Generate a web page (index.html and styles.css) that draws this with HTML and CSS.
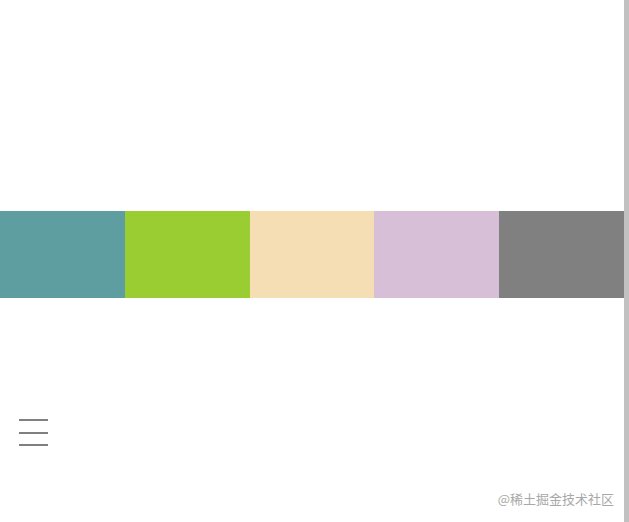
FILE: index.html
```html
<!DOCTYPE html>
<html lang="zh">
<head>
<meta charset="utf-8">
<link rel="stylesheet" href="styles.css">
</head>
<body>
<div class="page">
  <main class="main">
    <div class="bands">
      <div class="band cadet"></div>
      <div class="band green"></div>
      <div class="band wheat"></div>
      <div class="band thistle"></div>
      <div class="band gray"></div>
    </div>
    <div class="menu">
      <span class="line"></span>
      <span class="line"></span>
      <span class="line"></span>
    </div>
    <div class="footer">
      <span class="mark">@稀土掘金技术社区</span>
    </div>
  </main>
  <div class="scrollbar"></div>
</div>
</body>
</html>
```

FILE: styles.css
```css
html, body {
  margin: 0;
  padding: 0;
  background: #ffffff;
}
.page {
  display: flex;
  width: 629px;
  height: 522px;
  overflow: hidden;
}
.main {
  width: 624px;
  display: flex;
  flex-direction: column;
}
.bands {
  display: flex;
  margin-top: 211px;
  height: 87px;
}
.band {
  flex: 1;
}
.cadet { background: #5f9ea0; }
.green { background: #9acd32; }
.wheat { background: #f5deb3; }
.thistle { background: #d8bfd8; }
.gray { background: #808080; }
.menu {
  margin-top: 121px;
  margin-left: 19px;
  width: 29px;
  display: flex;
  flex-direction: column;
  gap: 10.5px;
}
.line {
  display: block;
  height: 2px;
  background: #808080;
}
.footer {
  margin-top: auto;
  display: flex;
  justify-content: flex-end;
  padding: 0 10px 15px 0;
}
.mark {
  font-family: "Noto Sans CJK SC", "Noto Sans", sans-serif;
  font-size: 13px;
  line-height: 16px;
  color: #a8a8a8;
}
.scrollbar {
  width: 5px;
  background: #c1c1c1;
}
```
